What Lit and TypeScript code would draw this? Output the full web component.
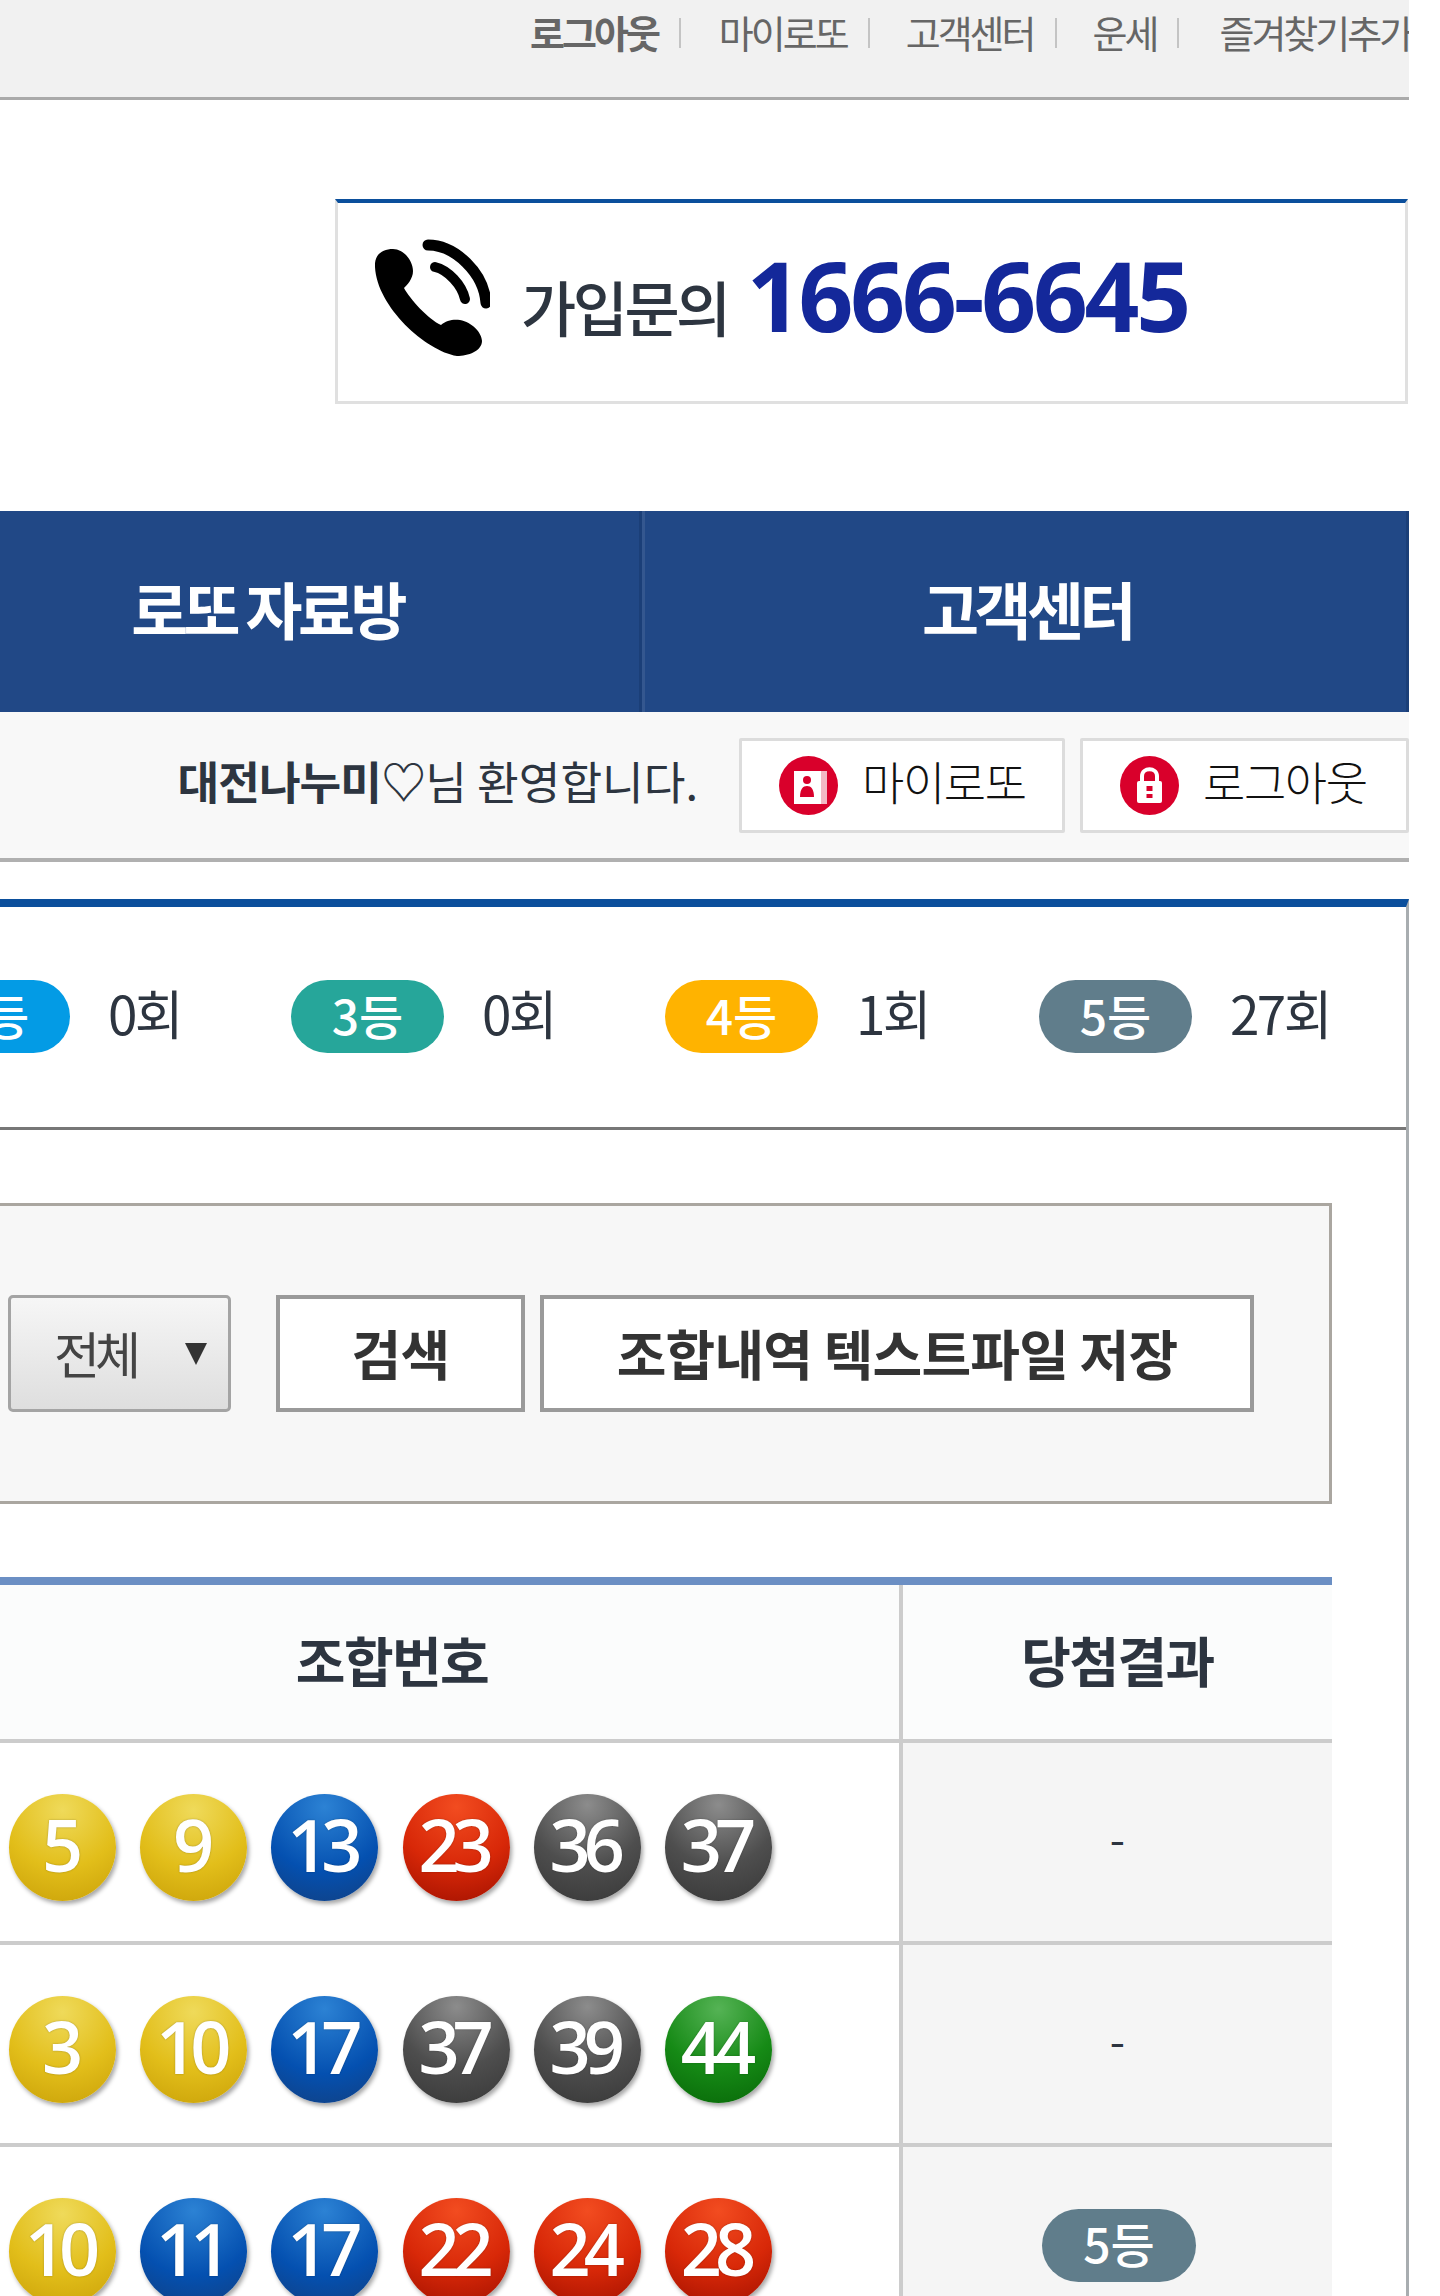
import { LitElement, html, css } from "lit";
import { customElement } from "lit/decorators.js";

const stats = [
  { rank: "2등", count: "0회", color: "#039be5" },
  { rank: "3등", count: "0회", color: "#26a69a" },
  { rank: "4등", count: "1회", color: "#ffb300" },
  { rank: "5등", count: "27회", color: "#607d8b" },
];

const rows = [
  { nums: [5, 9, 13, 23, 36, 37], result: "-" },
  { nums: [3, 10, 17, 37, 39, 44], result: "-" },
  { nums: [10, 11, 17, 22, 24, 28], result: "5등" },
];

function ballClass(n: number) {
  if (n <= 10) return "ball yellow";
  if (n <= 20) return "ball blue";
  if (n <= 30) return "ball red";
  if (n <= 40) return "ball gray";
  return "ball green";
}

@customElement("app-root")
export class AppRoot extends LitElement {
  static styles = css`
    :host {
      display: block;
      width: 1440px;
      height: 2296px;
      overflow: hidden;
      background: #fff;
      font-family: "Noto Sans CJK KR", "Noto Sans", sans-serif;
      color: #2d3540;
    }
    .page {
      width: 1409px;
      height: 2296px;
      overflow: hidden;
    }
    .top {
      display: flex;
      align-items: flex-start;
      height: 97px;
      border-bottom: 3px solid #aaa;
      background: #f1f1f1;
      padding-left: 530px;
      white-space: nowrap;
      overflow: hidden;
      font-size: 38px;
      line-height: 64px;
      letter-spacing: -3px;
      color: #666;
    }
    .top b {
      font-weight: 700;
    }
    .top .sep {
      width: 2px;
      height: 30px;
      margin: 18px 36px 0 21px;
      background: #c4c4c4;
      flex: none;
    }
    .top .sep.first {
      margin-right: 38px;
    }
    .top .sep.wide {
      margin-right: 40px;
    }
    .call {
      display: flex;
      align-items: center;
      box-sizing: border-box;
      width: 1073px;
      height: 205px;
      margin: 99px 0 0 335px;
      padding-left: 37px;
      border: 3px solid #e0e0e0;
      border-top: 4px solid #0b4f9c;
      background: #fff;
    }
    .call svg {
      flex: none;
      margin-top: -10px;
    }
    .call .label {
      margin-left: 31px;
      margin-top: 8px;
      font-size: 60px;
      font-weight: 500;
      letter-spacing: -3.5px;
      line-height: 80px;
    }
    .call .tel {
      margin-left: 19px;
      margin-top: -14px;
      font-family: "Noto Sans", sans-serif;
      font-size: 96px;
      font-weight: 700;
      letter-spacing: -3.2px;
      line-height: 100px;
      color: #14289a;
    }
    .nav {
      display: flex;
      height: 201px;
      margin-top: 107px;
      margin-left: -105px;
      background: #214886;
      font-size: 62px;
      font-weight: 700;
      letter-spacing: -4.6px;
      color: #fff;
    }
    .nav div {
      display: flex;
      align-items: center;
      justify-content: center;
      box-sizing: border-box;
      padding-bottom: 8px;
    }
    .nav .one {
      width: 747px;
      border-right: 3px solid #1b3f78;
    }
    .nav .two {
      width: 767px;
      padding-left: 3px;
      border-left: 3px solid #34578f;
      border-right: 3px solid #1b3f78;
    }
    .sub {
      display: flex;
      align-items: center;
      justify-content: flex-end;
      box-sizing: border-box;
      height: 150px;
      border-bottom: 4px solid #b0b0b0;
      background: #f8f8f8;
    }
    .hello {
      margin-right: 41px;
      margin-top: -10px;
      font-size: 45.3px;
      line-height: 60px;
      white-space: nowrap;
    }
    .hello b {
      font-weight: 700;
      letter-spacing: -1px;
    }
    .btn {
      display: flex;
      align-items: center;
      box-sizing: border-box;
      height: 95px;
      width: 326px;
      padding-left: 37px;
      border: 3px solid #dcdcdc;
      border-radius: 2px;
      background: #fff;
      font-size: 46px;
      font-weight: 300;
      letter-spacing: -1.4px;
      color: #111;
    }
    .btn + .btn {
      margin-left: 15px;
      width: 329px;
    }
    .btn svg {
      flex: none;
      margin-right: 24px;
    }
    .btn span {
      margin-top: -11px;
    }
    .main {
      box-sizing: border-box;
      height: 1397px;
      margin-top: 37px;
      border-top: 8px solid #0b4f9c;
      border-right: 3px solid #a8adb0;
      overflow: hidden;
    }
    .stats {
      display: grid;
      grid-template-columns: repeat(4, 374px);
      align-items: center;
      height: 220px;
      margin-left: -83px;
      border-bottom: 3px solid #777;
    }
    .stat {
      display: flex;
      align-items: center;
      gap: 38px;
      margin-top: -1px;
    }
    .stat span {
      margin-top: -9px;
      font-size: 53px;
      letter-spacing: -2.6px;
      line-height: 60px;
    }
    .pill {
      display: flex;
      align-items: center;
      justify-content: center;
      flex: none;
      box-sizing: border-box;
      width: 153px;
      height: 73px;
      padding-bottom: 6px;
      border-radius: 37px;
      font-size: 48px;
      font-weight: 500;
      color: #fff;
    }
    .search {
      display: flex;
      align-items: center;
      box-sizing: border-box;
      width: 1352px;
      height: 301px;
      margin: 73px 0 0 -20px;
      padding-left: 25px;
      border: 3px solid #aaa6a0;
      background: #f7f7f7;
    }
    .select {
      display: flex;
      align-items: center;
      justify-content: space-between;
      box-sizing: border-box;
      width: 223px;
      height: 117px;
      padding: 0 21px 3px 43px;
      border: 3px solid #a4a4a4;
      border-radius: 5px;
      background: linear-gradient(#f6f6f6, #dedede);
      font-size: 50px;
      letter-spacing: -5px;
      color: #444;
    }
    .select i {
      width: 0;
      height: 0;
      margin-bottom: -3px;
      border-left: 11px solid transparent;
      border-right: 11px solid transparent;
      border-top: 22px solid #333;
    }
    .plain {
      display: flex;
      align-items: center;
      justify-content: center;
      box-sizing: border-box;
      height: 117px;
      padding-bottom: 3px;
      border: 4px solid #9a9a9a;
      background: #fff;
      font-size: 54px;
      font-weight: 700;
      letter-spacing: -0.8px;
      color: #333;
      white-space: nowrap;
    }
    .plain.find {
      width: 249px;
      margin-left: 45px;
    }
    .plain.save {
      width: 714px;
      margin-left: 15px;
    }
    .table {
      width: 1447px;
      margin: 73px 0 0 -115px;
      border-top: 8px solid #6b8fc4;
    }
    .tr {
      display: grid;
      grid-template-columns: 1014px 4px 429px;
      height: 198px;
      border-bottom: 4px solid #ccc;
    }
    .tr.head {
      height: 154px;
      background: #fbfcfc;
      font-size: 54px;
      font-weight: 700;
      letter-spacing: -1.6px;
    }
    .tr.head > div {
      display: flex;
      align-items: center;
      justify-content: center;
      padding-bottom: 6px;
    }
    .tr.head > .bar {
      padding: 0;
    }
    .tr .bar {
      background: #ccc;
    }
    .tr .nums {
      display: flex;
      align-items: center;
      gap: 24.2px;
      padding: 10px 0 0 124px;
    }
    .tr .res {
      display: flex;
      align-items: center;
      justify-content: center;
      padding-bottom: 10px;
      background: #f5f5f5;
      font-size: 44px;
    }
    .tr .res.rank {
      padding: 0 0 2px 3px;
    }
    .tr.head .res {
      background: transparent;
      font-size: 54px;
    }
    .ball {
      display: flex;
      align-items: center;
      justify-content: center;
      flex: none;
      box-sizing: border-box;
      width: 107px;
      height: 107px;
      padding-bottom: 6px;
      border-radius: 50%;
      font-family: "Open Sans", sans-serif;
      font-size: 72px;
      font-weight: 600;
      letter-spacing: -7px;
      color: #fff;
      text-indent: -7px;
      box-shadow: 2px 3px 4px rgba(0, 0, 0, 0.35);
      text-shadow: 0 0 2px rgba(0, 0, 0, 0.3);
    }
    .yellow {
      background: radial-gradient(circle at 50% 15%, #efda5a, #e2be1a 55%, #c9a008 100%);
    }
    .blue {
      background: radial-gradient(circle at 50% 12%, #2c82d4, #0450b0 60%, #123f80 100%);
    }
    .red {
      background: radial-gradient(circle at 50% 12%, #f24c20, #d82808 55%, #a01000 100%);
    }
    .gray {
      background: radial-gradient(circle at 50% 10%, #8c8c8c, #4e4e4e 55%, #373737 100%);
    }
    .green {
      background: radial-gradient(circle at 50% 12%, #55b355, #168a16 55%, #076607 100%);
    }
    .wide-pill {
      width: 154px;
      background: #607d8b;
    }
  `;

  render() {
    return html`
      <div class="page">
        <div class="top">
          <b>로그아웃</b><i class="sep first"></i>
          <span>마이로또</span><i class="sep"></i>
          <span>고객센터</span><i class="sep"></i>
          <span>운세</span><i class="sep wide"></i>
          <span>즐겨찾기추가</span>
        </div>

        <div class="call">
          <svg width="115" height="120" viewBox="15 22 115 120">
            <path d="M15 52C14 40 22 34 33 34C44 34 53 46 53 56C53 64 47 70 44 73C50 84 68 104 81 110C86 105 94 104 100 105C112 107 122 118 122 126C122 136 108 141 97 141C66 136 17 92 15 52Z" fill="#000"/>
            <path d="M68 30C95 30 124 58 126 88" fill="none" stroke="#000" stroke-width="11" stroke-linecap="round"/>
            <path d="M75 52C88 55 102 70 105 84" fill="none" stroke="#000" stroke-width="10" stroke-linecap="round"/>
          </svg>
          <span class="label">가입문의</span>
          <span class="tel">1666-6645</span>
        </div>

        <div class="nav">
          <div class="one">로또 자료방</div>
          <div class="two">고객센터</div>
        </div>

        <div class="sub">
          <div class="hello"><b>대전나누미♡</b>님 환영합니다.</div>
          <div class="btn">
            <svg width="59" height="59" viewBox="0 0 59 59">
              <circle cx="29.5" cy="29.5" r="29.5" fill="#d9002b"/>
              <rect x="15" y="15" width="33" height="33" fill="#fff"/>
              <rect x="42" y="15" width="6" height="33" fill="#f3b8c4"/>
              <circle cx="28" cy="24" r="4" fill="#d9002b"/>
              <path d="M21 41C21 33 24 30 28 30C32 30 35 33 35 41Z" fill="#d9002b"/>
            </svg>
            <span>마이로또</span>
          </div>
          <div class="btn">
            <svg width="59" height="59" viewBox="0 0 59 59">
              <circle cx="29.5" cy="29.5" r="29.5" fill="#d9002b"/>
              <path d="M22 26V20C22 11 37 11 37 20V26" fill="none" stroke="#fff" stroke-width="4"/>
              <rect x="17" y="25" width="25" height="22" rx="2" fill="#fff"/>
              <rect x="26.5" y="30" width="6" height="5" fill="#d9002b"/>
              <rect x="26.5" y="38" width="6" height="4" fill="#d9002b"/>
            </svg>
            <span>로그아웃</span>
          </div>
        </div>

        <div class="main">
          <div class="stats">
            ${stats.map(
              (s) => html`
                <div class="stat">
                  <div class="pill" style="background:${s.color}">${s.rank}</div>
                  <span>${s.count}</span>
                </div>
              `
            )}
          </div>

          <div class="search">
            <div class="select">전체<i></i></div>
            <div class="plain find">검색</div>
            <div class="plain save">조합내역 텍스트파일 저장</div>
          </div>

          <div class="table">
            <div class="tr head">
              <div>조합번호</div>
              <div class="bar"></div>
              <div class="res">당첨결과</div>
            </div>
            ${rows.map(
              (r) => html`
                <div class="tr">
                  <div class="nums">
                    ${r.nums.map((n) => html`<div class=${ballClass(n)}>${n}</div>`)}
                  </div>
                  <div class="bar"></div>
                  ${r.result === "-"
                    ? html`<div class="res">${r.result}</div>`
                    : html`<div class="res rank"><div class="pill wide-pill">${r.result}</div></div>`}
                </div>
              `
            )}
          </div>
        </div>
      </div>
    `;
  }
}
